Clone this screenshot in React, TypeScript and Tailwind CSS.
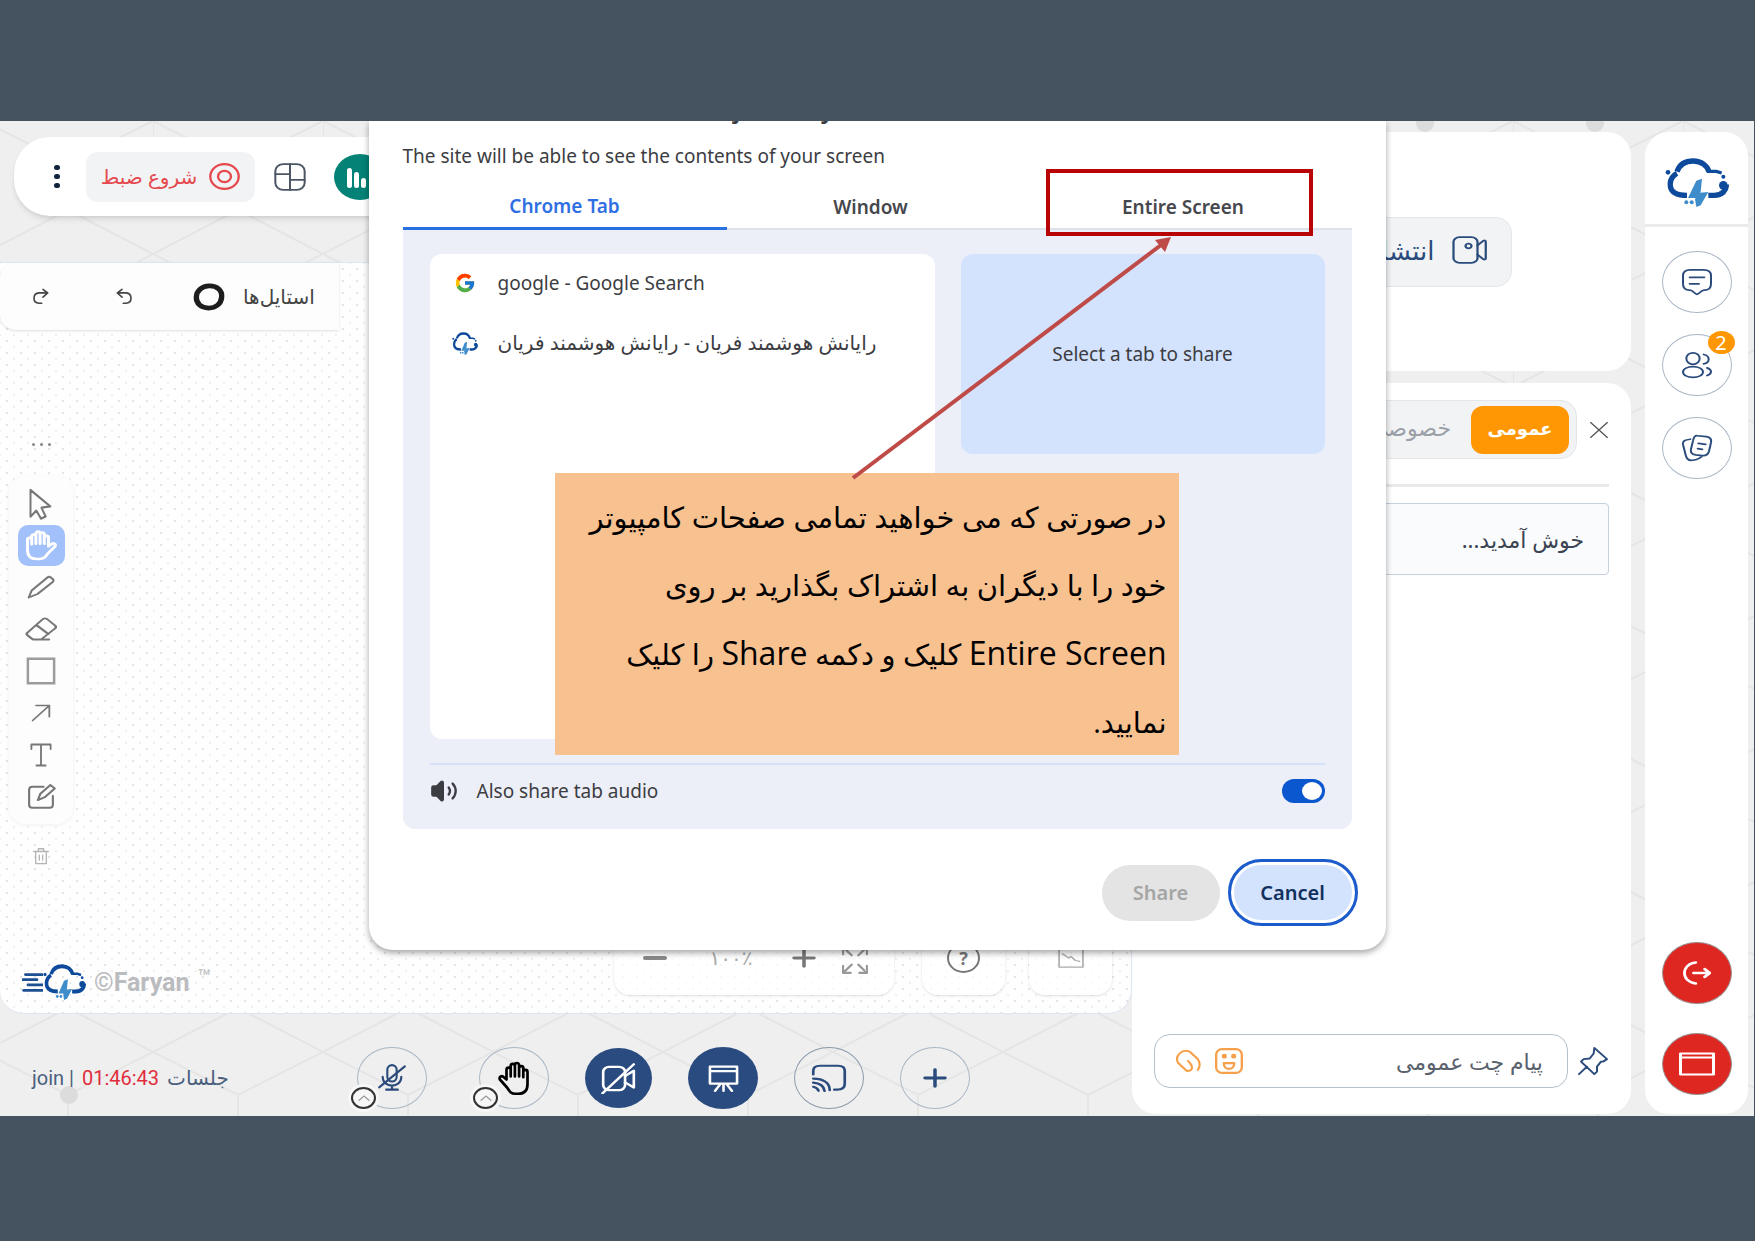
import React from "react";
import { FcGoogle } from "react-icons/fc";
import { Volume2 } from "lucide-react";

interface IconProps {
  className?: string;
  stroke?: number;
  children: React.ReactNode;
}

const Icon: React.FC<IconProps> = ({ className, stroke = 1.5, children }) => (
  <svg
    viewBox="0 0 24 24"
    preserveAspectRatio="none"
    fill="none"
    stroke="currentColor"
    strokeWidth={stroke}
    strokeLinecap="round"
    strokeLinejoin="round"
    aria-hidden="true"
    className={className}
  >
    {children}
  </svg>
);

const CloudMark: React.FC<{ className?: string }> = ({ className }) => (
  <svg
    viewBox="0 0 192 147"
    preserveAspectRatio="none"
    fill="none"
    aria-hidden="true"
    className={className}
  >
    <g stroke="#0d4a9b" strokeWidth="16">
      <path d="M36 41C44 18 64 9 85 9c24 0 42 14 47 32" />
      <path d="M36 46C9 60 10 96 32 106c11 6 22 6 34 6" />
      <path d="M130 112h18c24 0 37-16 36-32" />
      <path d="M126 40h28l16 5" strokeWidth="10" />
    </g>
    <g fill="#0d4a9b">
      <circle cx="9" cy="43" r="7" />
      <circle cx="175" cy="56" r="6" />
      <circle cx="175" cy="82" r="13" />
    </g>
    <g fill="#3f8ccb">
      <path d="M111 62L94 68 69 120h26l12-18z" />
      <path d="M130 102l-26 2-14 19 4 24 13-5z" />
      <circle cx="64" cy="133" r="6" />
      <circle cx="80" cy="133" r="6" />
    </g>
  </svg>
);

const HandShape = () => (
  <path d="M7 13V6.5a1.4 1.4 0 0 1 2.8 0V4a1.4 1.4 0 0 1 2.8 0v-.6a1.4 1.4 0 0 1 2.8 0V5.500a1.400 1.400 0 0 1 2.800 0V8a1.400 1.400 0 0 1 2.800 0v8c0 4-2 6.500-6 6.500h-2c-3 0-4-1.500-5.500-4L2.600 13c-.8-1.800 1.400-3 2.600-1.500zM9.800 6v5M12.600 4v7M15.400 5v6M18.200 7.500v4" />
);

const HexBackground = () => (
  <svg className="absolute inset-0 h-full w-full" aria-hidden="true">
    <defs>
      <pattern
        id="hex"
        x="153"
        y="133"
        width="170"
        height="266"
        patternUnits="userSpaceOnUse"
      >
        <path
          d="M0 0L85 43L170 0M0 266L85 222L170 266M85 43V89M0 133L85 176L170 133M0 133L85 89L170 133M0 89V176M85 176V222"
          stroke="#e5e5e5"
          strokeWidth="2"
          fill="none"
        />
      </pattern>
    </defs>
    <rect width="100%" height="100%" fill="url(#hex)" />
    <g fill="#dcdcdc">
      <circle cx="69" cy="974" r="9" />
      <circle cx="1425" cy="2" r="9" />
      <circle cx="1595" cy="2" r="9" />
    </g>
  </svg>
);

const tools = [
  {
    label: "Select",
    icon: (
      <Icon className="h-8 w-7" stroke={1.7}>
        <path d="M3 1.500v20l5-4.500 4 6 4-1.600-3.600-6.600 7.600-1z" />
      </Icon>
    ),
  },
  {
    label: "Hand",
    active: true,
    icon: (
      <Icon className="h-8 w-9 -scale-x-100 text-white" stroke={2}>
        <HandShape />
      </Icon>
    ),
  },
  {
    label: "Draw",
    icon: (
      <Icon className="h-6 w-7" stroke={1.8}>
        <path d="M1.500 22.500l2.500-7L17.500 2.500c1-1 2-1 3 0l1.500 1.500c1 1 1 2 0 3L9 19zM1.500 22.500L9 19" />
      </Icon>
    ),
  },
  {
    label: "Eraser",
    icon: (
      <Icon className="h-6 w-8" stroke={1.800}>
        <path d="M6 22.500L2 18.500c-1-1-1-2 0-3L13 2.500c1-1.500 3-1.500 4 0l5.500 6c1 1 1 2 0 3L12 22.500zM18 22.500H6M8.500 8l9 9" />
      </Icon>
    ),
  },
  {
    label: "Rectangle",
    icon: (
      <Icon className="h-7 w-[30px]" stroke={2}>
        <path d="M1.500 1.500h21v21h-21z" strokeLinejoin="miter" stroke="#9c9c9c" />
      </Icon>
    ),
  },
  {
    label: "Arrow",
    icon: (
      <Icon className="h-[18px] w-5" stroke={2.2}>
        <path d="M2 22L22 2M6 2h16v15" />
      </Icon>
    ),
  },
  {
    label: "Text",
    icon: (
      <Icon className="h-6 w-[22px]" stroke={2}>
        <path d="M1.500 6V1.500h21V6M12 1.500v21M7 22.500h10" />
      </Icon>
    ),
  },
  {
    label: "Note",
    icon: (
      <Icon className="h-7 w-[30px]" stroke={1.7}>
        <path d="M14 4H5C3.500 4 2.500 5 2.500 6.500v13C2.500 21 3.500 22 5 22h14c1.500 0 2.500-1 2.500-2.500V12" />
        <path d="M9.500 15.500l2-5.500 8-7.500 3.500 3-8 7.500z" />
      </Icon>
    ),
  },
];

const TopBar = () => (
  <div className="ml-[14px] flex h-[79px] items-center rounded-l-[36px] bg-white pl-9 shadow-md">
    <button aria-label="More" className="flex w-[14px] flex-col items-center gap-1">
      <span className="h-[5px] w-[6px] rounded-full bg-[#12233f]" />
      <span className="h-[5px] w-[6px] rounded-full bg-[#12233f]" />
      <span className="h-[5px] w-[6px] rounded-full bg-[#12233f]" />
    </button>
    <button className="ml-[22px] flex h-[50px] w-[169px] items-center justify-center gap-3 rounded-xl bg-[#f2f3f5] text-[#e5484d]">
      <span className="text-xl">شروع ضبط</span>
      <Icon className="h-[27px] w-[31px]" stroke={1.800}>
        <circle cx="12" cy="12" r="11" />
        <circle cx="12" cy="12" r="5" />
      </Icon>
    </button>
    <button aria-label="Layout" className="ml-[19px] text-[#4b5563]">
      <Icon className="h-7 w-8">
        <rect x="1" y="1" width="22" height="22" rx="6" />
        <path d="M12 1v22M1 9.500h11M12 14.500h11" />
      </Icon>
    </button>
    <button
      aria-label="Poll"
      className="ml-7 flex h-[46px] w-[52px] items-end gap-[2px] rounded-[50%] bg-[#048276] pb-3 pl-[13px]"
    >
      <span className="h-5 w-[5px] rounded-sm bg-white" />
      <span className="h-4 w-[5px] rounded-sm bg-white" />
      <span className="h-[10px] w-[5px] rounded-sm bg-white" />
    </button>
  </div>
);

const Board = () => (
  <section className="relative flex flex-1 flex-col rounded-b-3xl border-y border-r border-[#dfe6f3] bg-[#fefefe] bg-[radial-gradient(#e4e4e4_1px,transparent_1px),radial-gradient(#efefef_1px,transparent_1px)] bg-size-[14px_12px] bg-position-[0_0,7px_6px]">
    <div className="flex h-[67px] w-[339px] items-center rounded-l-2xl bg-[#fdfdfd] pl-[33px] text-[#444] shadow">
      <button aria-label="Redo">
        <Icon className="h-[17px] w-4" stroke={2.4}>
          <path d="M15 2l7 5-7 6M22 7H9C-1 8-1 21 9 21.500h4" />
        </Icon>
      </button>
      <button aria-label="Undo" className="ml-[67px]">
        <Icon className="h-[17px] w-4" stroke={2.4}>
          <path d="M9 2L2 7l7 6M2 7h13c10 1 10 14 0 14.500h-4" />
        </Icon>
      </button>
      <button className="ml-[61px] flex items-center gap-[18px]">
        <Icon className="h-7 w-8" stroke={4}>
          <path
            d="M12 2.500c6-.3 10 4 9.500 9.500-.4 6-4.500 9.500-9.800 9.500C6 21.300 2.300 17.500 2.500 12 2.800 6 7 2.700 12 2.500z"
            stroke="#1d1d1d"
          />
        </Icon>
        <span className="text-xl">استایل‌ها</span>
      </button>
    </div>

    <div className="mt-[98px] flex w-[82px] flex-col items-center text-[#777]">
      <button aria-label="More tools" className="flex h-8 items-center gap-[5px]">
        <span className="size-[3px] rounded-full bg-[#888]" />
        <span className="size-[3px] rounded-full bg-[#888]" />
        <span className="size-[3px] rounded-full bg-[#888]" />
      </button>
      <div className="mt-4 flex h-[348px] w-16 flex-col items-center justify-between rounded-2xl bg-[#fdfdfd] py-[7px] shadow-[0_1px_4px_rgba(0,0,0,0.06)]">
        {tools.map((tool) => (
          <button
            key={tool.label}
            aria-label={tool.label}
            className={
              tool.active
                ? "flex h-[41px] w-[47px] items-center justify-center rounded-[10px] bg-[#a2c1fb]"
                : "flex h-[41px] w-[47px] items-center justify-center"
            }
          >
            {tool.icon}
          </button>
        ))}
      </div>
      <button aria-label="Delete" className="mt-6 text-[#b5b5b5]">
        <Icon className="h-[17px] w-4" stroke={2}>
          <path d="M1 5h22M8 5V1h8v4M4 5v17h16V5M9.500 10v7M14.500 10v7" />
        </Icon>
      </button>
    </div>

    <div className="mt-auto flex items-end justify-between pr-[19px] pb-3 pl-[22px]">
      <div className="flex items-center font-['Roboto',sans-serif] font-bold text-[#bbbcc0]">
        <Icon className="h-[19px] w-[21px]" stroke={3.5}>
          <path d="M4 2h20M1 8.500h16M7 15h17M2 22h22" stroke="#1d4f93" />
        </Icon>
        <CloudMark className="h-9 w-[43px]" />
        <span className="ml-2 text-[25px]">©Faryan</span>
        <span className="mb-2 ml-2 text-[22px] leading-none font-normal">™</span>
      </div>
      <div className="mb-[6px] flex items-end gap-7 text-[#777]">
        <div className="flex h-[74px] w-[280px] items-center rounded-2xl bg-white/70 pl-[29px] shadow-sm">
          <button aria-label="Zoom out" className="h-1 w-6 rounded bg-[#888]" />
          <span className="ml-[42px] w-[44px] text-center text-xl leading-none text-[#aaa]">۱۰۰٪</span>
          <button aria-label="Zoom in" className="ml-[39px]">
            <Icon className="h-5 w-6" stroke={3.5}>
              <path d="M2 12h20M12 2v20" />
            </Icon>
          </button>
          <button aria-label="Fit" className="ml-[26px] pt-1 text-[#999]">
            <Icon className="h-7 w-[26px]" stroke={2}>
              <path d="M1 7V1h7M1 1l8 7M16 1h7v6M23 1l-8 7M1 17v6h7M1 23l8-7M16 23h7v-6M23 23l-8-7" />
            </Icon>
          </button>
        </div>
        <div className="flex h-[74px] w-[83px] items-center justify-center rounded-2xl bg-white/70 shadow-sm">
          <button
            aria-label="Help"
            className="flex h-[30px] w-[33px] items-center justify-center rounded-[50%] border-2 border-[#777] text-lg font-bold"
          >
            ?
          </button>
        </div>
        <div className="-ml-1 flex h-[74px] w-[83px] items-center justify-center rounded-2xl bg-white/70 text-[#aaa] shadow-sm">
          <button aria-label="Minimap">
            <Icon className="h-5 w-[26px]">
              <path d="M1 1h22v22H1zM4 7l6 5 2-2 4 5 4 1" />
            </Icon>
          </button>
        </div>
      </div>
    </div>
  </section>
);

const Chevron = () => (
  <span className="absolute -bottom-px -left-[7px] flex h-[22px] w-[25px] items-center justify-center rounded-[50%] border-2 border-[#333] bg-[#f7f7f7] text-[#999] ring-3 ring-[#f7f7f7]">
    <Icon className="h-2 w-3" stroke={3}>
      <path d="M2 19L12 6l10 13" />
    </Icon>
  </span>
);

const BottomBar = () => (
  <footer className="flex h-[102px] items-end pb-[7px] pl-8 text-[#2a4b7c]">
    <div className="flex h-[62px] w-[325px] items-center gap-2 font-['Roboto','DejaVu_Sans',sans-serif] text-xl text-[#4a5f7d]">
      <span>join |</span>
      <span className="text-[#e02d3c]">01:46:43</span>
      <span>جلسات</span>
    </div>
    <div className="mr-9 flex gap-[52px]">
      <button
        aria-label="Microphone"
        className="relative flex h-[62px] w-[70px] items-center justify-center rounded-[50%] border border-[#a9b6c4]"
      >
        <Icon className="h-7 w-7" stroke={1.800}>
          <rect x="8" y="1" width="8" height="14" rx="4" />
          <path d="M4 11c0 10 16 10 16 0M12 19v3M7 22h10M1 20L23 2" />
        </Icon>
        <Chevron />
      </button>
      <button
        aria-label="Raise hand"
        className="relative flex h-[62px] w-[70px] items-center justify-center rounded-[50%] border border-[#a9b6c4] text-black"
      >
        <Icon className="h-9 w-9" stroke={1.800}>
          <HandShape />
        </Icon>
        <Chevron />
      </button>
    </div>
    <div className="flex items-center gap-9">
      <button
        aria-label="Camera"
        className="flex h-[60px] w-[67px] items-center justify-center rounded-[50%] bg-[#2a4b7f] text-white"
      >
        <Icon className="h-[31px] w-[35px]" stroke={1.800}>
          <rect x="1.500" y="3" width="15" height="18" rx="4" />
          <path d="M16.500 10l6-4v13l-6-4M1 23.500L22.500 1" />
        </Icon>
      </button>
      <button
        aria-label="Whiteboard"
        className="flex h-[62px] w-[70px] items-center justify-center rounded-[50%] bg-[#2a4b7f] text-white"
      >
        <Icon className="h-[27px] w-[31px]" stroke={2}>
          <path d="M1.500 1.500h21v15h-21zM1.500 5.500h21M12 17v6M9.500 17l-4 6M14.500 17l4 6" />
        </Icon>
      </button>
      <button
        aria-label="Cast"
        className="flex h-[62px] w-[70px] items-center justify-center rounded-[50%] border border-[#8b9aab]"
      >
        <Icon className="h-7 w-9" stroke={1.800}>
          <path d="M1.500 9V6c0-3 1.500-4.500 4.500-4.500h12c3 0 4.500 1.500 4.500 4.500v11c0 3-1.500 5-5 5h-2M1.500 12.500c7 0 11 4 11 10M1.500 16c4 .5 7 2.500 7.500 7M1.500 19.500c2 .5 3 1.500 3.500 3.500" />
        </Icon>
      </button>
      <button
        aria-label="Add"
        className="flex h-[62px] w-[70px] items-center justify-center rounded-[50%] border border-[#a9b6c4]"
      >
        <Icon className="h-5 w-6" stroke={3.500}>
          <path d="M2 12h20M12 2v20" />
        </Icon>
      </button>
    </div>
  </footer>
);

const ChatColumn = () => (
  <div dir="rtl" className="flex w-[499px] shrink-0 flex-col gap-3 pt-[11px] pb-[2px]">
    <section className="flex h-[239px] items-center justify-center rounded-3xl bg-white">
      <button className="flex h-[70px] w-[260px] items-center gap-[17px] rounded-2xl border border-[#e4e6ea] bg-[#f2f3f5] ps-[23px] pb-1 text-[#2a4b7c]">
        <Icon className="h-7 w-9 shrink-0">
          <rect x="1" y="1" width="16" height="22" rx="4" />
          <circle cx="11" cy="8.500" r="2" />
          <path d="M17 8l4-4c1-.5 1.500 0 1.500 1v14c0 1-.5 1.500-1.500 1l-4-4" />
        </Icon>
        <span className="text-[26px] leading-9">انتشار تصویر</span>
      </button>
    </section>

    <section className="flex flex-1 flex-col rounded-3xl bg-white px-[22px] pt-[17px] pb-[26px]">
      <div className="flex items-center gap-3">
        <button aria-label="Close chat" className="text-[#555]">
          <Icon className="h-[18px] w-5">
            <path d="M2 2l20 20M22 2L2 22" />
          </Icon>
        </button>
        <div className="flex h-[59px] items-center rounded-2xl border border-[#e4e6ea] bg-[#f2f3f5] px-[7px]">
          <button className="h-12 w-[98px] rounded-xl bg-[#fe9703] pb-1 text-lg font-bold text-white">
            عمومی
          </button>
          <button className="h-12 ps-5 pb-1 text-[22px] text-[#9b9fa8]">خصوصی</button>
        </div>
      </div>
      <div className="mt-[25px] h-[3px] bg-[#e8e9eb]" />
      <div className="mt-4 flex h-[72px] items-center rounded border border-[#c5d0da] bg-[#f9fbfd] px-6 text-[22px] text-[#3b4350]">
        خوش آمدید...
      </div>
      <div className="mt-auto flex items-center gap-[9px]">
        <button aria-label="Pin" className="shrink-0 text-[#2a4b7c]">
          <Icon className="h-[30px] w-8">
            <path d="M13 1.500l9.500 9-3 2-1.500 0-3 4 0 4-2 2L3 12.500l2-2 4.500-.500 3-4zM7.500 16.500l-6 6" />
          </Icon>
        </button>
        <div className="flex h-[54px] min-w-0 flex-1 items-center gap-[14px] rounded-2xl border border-[#b4c0cb] ps-6 pe-5 text-[#f7a04b]">
          <input
            aria-label="پیام چت عمومی"
            placeholder="پیام چت عمومی"
            className="w-full min-w-0 flex-1 bg-transparent text-[22px] text-[#4b5563] outline-none placeholder:text-[#59616d]"
          />
          <button aria-label="Emoji" className="shrink-0">
            <Icon className="h-[26px] w-7" stroke={2}>
              <rect x="1" y="1" width="22" height="22" rx="5" />
              <path d="M7.500 14h9c0 7-9 7-9 0z" />
              <circle cx="8" cy="7.500" r="1.200" />
              <circle cx="16" cy="7.500" r="1.200" />
            </Icon>
          </button>
          <button aria-label="Attach" className="shrink-0">
            <Icon className="h-6 w-[26px]" stroke={2}>
              <path d="M11 22L3 14C-1 7 7-1 14 3l7 7c3 5 2 8 0 11M11 22c6 0 6-5 1-10" />
            </Icon>
          </button>
        </div>
      </div>
    </section>
  </div>
);

const railButton =
  "relative flex h-[62px] w-[70px] items-center justify-center rounded-[50%] border border-[#a9b6c4]";
const railAction =
  "flex h-[62px] w-[70px] items-center justify-center rounded-[50%] border border-[#9a8f8f] bg-[#df2721] text-white";

const Rail = () => (
  <nav className="mt-[11px] mr-[6px] mb-[2px] ml-[14px] flex w-[103px] shrink-0 flex-col items-center rounded-3xl bg-white pb-[19px] text-[#2a4b7c]">
    <div className="flex h-[95px] w-full items-center justify-center border-b-3 border-[#ebebeb] pt-2">
      <CloudMark className="h-[49px] w-16" />
    </div>
    <div className="mt-6 flex flex-col gap-[21px]">
      <button aria-label="Chat" className={railButton}>
        <Icon className="h-7 w-8">
          <path d="M7 1.500h10c4 0 5.500 2 5.500 5v7c0 4-1.500 5.500-5 5.500-3 0-3.500 3.500-5.500 3.500s-2.500-3.500-5.500-3.500c-3.500 0-5-1.500-5-5.500V6.500c0-3 1.500-5 5.500-5zM6.500 8h11M6.500 13.500h7" />
        </Icon>
      </button>
      <button aria-label="Users" className={railButton}>
        <Icon className="h-7 w-8">
          <circle cx="9" cy="6.500" r="5" />
          <ellipse cx="9" cy="18" rx="7.500" ry="4.700" />
          <path d="M17 3c5 1 5 7 0 8M19.500 14.500c4 1.500 4 5 0 6.500" />
        </Icon>
        <span className="absolute -top-1 -right-1 flex h-[23px] w-[27px] items-center justify-center rounded-[50%] bg-[#fe9703] text-xl leading-none text-white">
          2
        </span>
      </button>
      <button aria-label="Notes" className={railButton}>
        <Icon className="h-7 w-8">
          <path d="M12 1.500l7 .8c3 .5 4 2 3.500 5l-1.500 7.500c-.7 3-2 4-5 3.700l-5-.6c-3-.5-4-2-3.500-5l1.500-7c.5-3 1-4.500 3-4.400zM13 8l5.500.8M12.500 12.500l3.500.6M7 4.500C3 5 1 6 1.500 9l2 9c.7 3.500 2 5 5 4.500 3-.4 6-1.500 7.500-4" />
        </Icon>
      </button>
    </div>
    <div className="mt-auto flex flex-col gap-[29px]">
      <button aria-label="Leave" className={railAction}>
        <Icon className="h-6 w-7" stroke={2.400}>
          <path d="M11 1.500C-2 3-2 21 11 22.500M9 12h14M18.500 8l4.500 4-4.500 4" />
        </Icon>
      </button>
      <button aria-label="Window" className={railAction}>
        <Icon className="h-6 w-9" stroke={2}>
          <path d="M1 1.500h22v21H1zM1 5.500h22" />
        </Icon>
      </button>
    </div>
  </nav>
);

const ShareDialog = () => (
  <div
    role="dialog"
    aria-label="Choose what to share with join.faryan.ir"
    className="absolute inset-x-0 top-0 mx-auto flex h-[829px] max-w-[1017px] flex-col rounded-b-3xl bg-white px-[34px] pb-6 text-[#3c3d42] shadow-[0_3px_6px_rgba(0,0,0,0.35)]"
  >
    <h2 className="flex h-[6px] items-end overflow-hidden text-[25px] leading-normal font-semibold whitespace-nowrap">
      Choose what to share with join.faryan.ir
    </h2>
    <p className="mt-[15px] text-[19px] leading-7">
      The site will be able to see the contents of your screen
    </p>

    <div className="mt-3 flex text-[19px] font-semibold">
      <button className="h-12 w-[324px] border-b-3 border-[#2970e0] pt-1 text-[#2f6fe4]">
        Chrome Tab
      </button>
      <button className="h-12 w-[288px] border-b-2 border-[#dfe1ea] pt-1 text-[#46474c]">
        Window
      </button>
      <button className="h-12 flex-1 border-b-2 border-[#dfe1ea] pt-1 text-[#46474c]">
        Entire Screen
      </button>
    </div>

    <div className="flex flex-1 flex-col rounded-b-xl bg-[#eceef8] px-[27px] pt-6 text-[19px]">
      <div className="flex flex-1 gap-[26px]">
        <ul className="flex-1 rounded-xl bg-white px-[22px] pt-2">
          <li className="flex h-[42px] items-center gap-5">
            <span className="flex w-[26px] justify-center">
              <FcGoogle size={22} />
            </span>
            <span>google - Google Search</span>
          </li>
          <li className="mt-[18px] flex h-[42px] items-center gap-5">
            <CloudMark className="h-[23px] w-[26px]" />
            <span className="text-xl">رایانش هوشمند فریان - رایانش هوشمند فریان</span>
          </li>
        </ul>
        <div className="flex h-[200px] w-[364px] items-center justify-center rounded-xl bg-[#d3e2fd]">
          Select a tab to share
        </div>
      </div>
      <label className="mt-6 flex h-[66px] items-center border-t-2 border-[#d5e1f9] pb-3">
        <Volume2 size={28} strokeWidth={2} className="[&_path:first-child]:fill-current" />
        <span className="ml-[19px] flex-1">Also share tab audio</span>
        <input type="checkbox" defaultChecked className="peer sr-only" />
        <span className="flex h-6 w-[43px] items-center justify-end rounded-full bg-[#0b57d0] px-[3px]">
          <span className="h-[18px] w-5 rounded-[50%] bg-white" />
        </span>
      </label>
    </div>

    <div className="mt-[30px] -mr-[6px] flex items-center justify-end gap-2 text-xl font-semibold">
      <button disabled className="h-14 w-[118px] rounded-full bg-[#e4e4e4] text-[#a5a5a5]">
        Share
      </button>
      <button className="h-[67px] w-[130px] rounded-full border-3 border-[#1c5bcb] bg-[#d3e2fd] text-[#12305e] inset-ring-3 inset-ring-white">
        Cancel
      </button>
    </div>

    <div className="absolute top-12 right-[73px] h-[67px] w-[267px] border-4 border-[#b80404]" />
    <p
      dir="rtl"
      className="absolute top-[352px] left-[186px] h-[282px] w-[624px] bg-[#f8c190] px-3 pt-[10px] font-['Open_Sans','DejaVu_Sans',sans-serif] text-[29px] leading-[68px] text-black"
    >
      در صورتی که می خواهید تمامی صفحات کامپیوتر
      <br />
      خود را با دیگران به اشتراک بگذارید بر روی
      <br />
      <span className="text-[32px]">Entire Screen</span> کلیک و دکمه{" "}
      <span className="text-[32px]">Share</span> را کلیک
      <br />
      نمایید.
    </p>
    <svg
      className="pointer-events-none absolute top-[116px] left-[480px]"
      width="326"
      height="246"
      aria-hidden="true"
    >
      <path d="M4 241L312 8" stroke="#be4b48" strokeWidth="4" />
      <path d="M322 0L306 3L316 15Z" fill="#be4b48" />
    </svg>
  </div>
);

const App: React.FC = () => {
  return (
    <div className="flex min-h-screen flex-col bg-[#45525f] pt-[121px] pr-px pb-[125px] font-['Noto_Sans','DejaVu_Sans',sans-serif]">
      <main className="relative flex flex-1 overflow-hidden bg-[#efefef]">
        <HexBackground />
        <div className="relative flex flex-1">
          <div className="flex flex-1 flex-col pt-4">
            <TopBar />
            <div className="mt-[46px] flex flex-1 flex-col">
              <Board />
            </div>
            <BottomBar />
          </div>
          <ChatColumn />
          <Rail />
        </div>
        <ShareDialog />
      </main>
    </div>
  );
};

export default App;
